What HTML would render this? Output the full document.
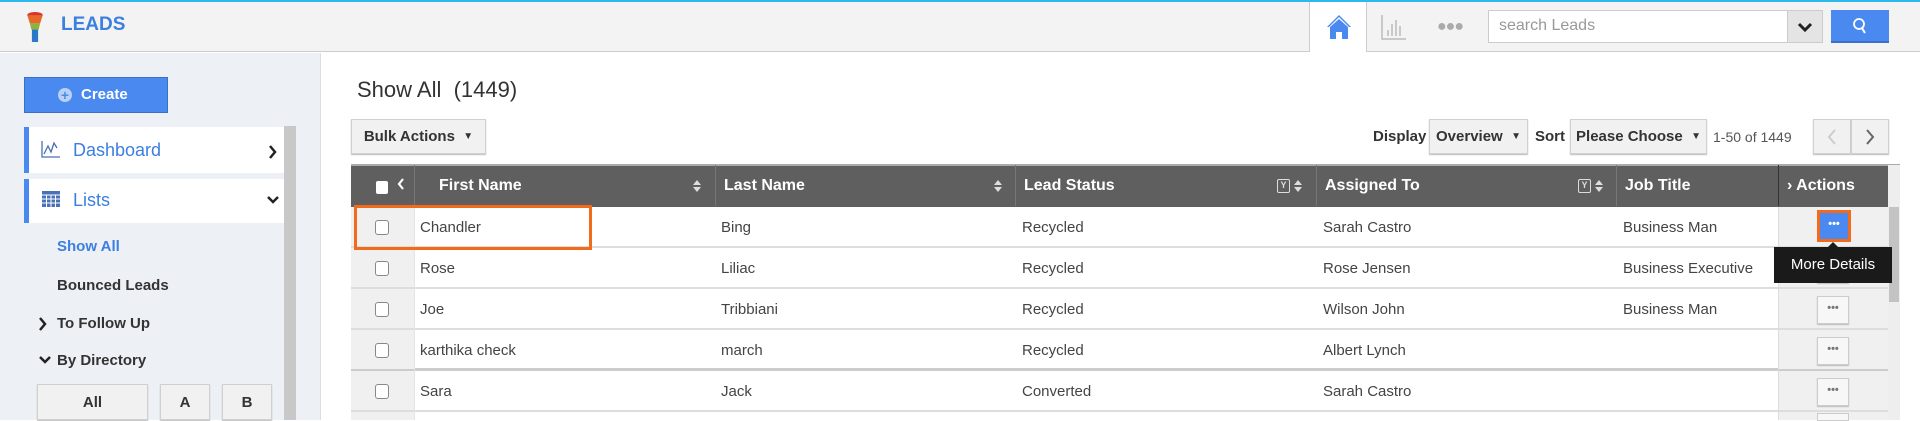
<!DOCTYPE html>
<html><head><meta charset="utf-8"><style>
*{box-sizing:border-box;margin:0;padding:0}
body{width:1920px;height:420px;overflow:hidden;background:#fff;font-family:"Liberation Sans",sans-serif;position:relative;color:#333}
.a{position:absolute}
.btn{position:absolute;background:#f1f1f1;border:1px solid #d0d0d0;box-shadow:0 1px 1px #bbb;font-size:15px;font-weight:bold;color:#333;display:flex;align-items:center;justify-content:center}
.th{position:absolute;top:165px;height:41px;color:#fff;font-weight:bold;font-size:16px;line-height:41px;border-left:1px solid #777}
.row{position:absolute;left:351px;width:1537px;height:41px;border-bottom:2px solid #ddd}
.cell{position:absolute;font-size:15px;color:#444;line-height:41px}
.cb{position:absolute;left:24px;top:13px;width:14px;height:15px;border:1px solid #888;border-radius:3px;background:#fff}
.dots{position:absolute;left:1466px;top:7px;width:32px;height:28px;border:1px solid #ccc;background:#f7f7f7;box-shadow:0 1px 1px #bbb;font-size:11px;color:#777;text-align:center;line-height:22px;font-weight:bold}
.filt{position:absolute;top:179px;width:13px;height:14px;border:1.5px solid #ddd;border-radius:2px;color:#ddd;font-size:9px;text-align:center;line-height:11px;font-weight:bold}
</style></head><body>
<div class="a" style="left:0;top:0;width:1920px;height:2px;background:#2eb8f0"></div>
<div class="a" style="left:0;top:2px;width:1920px;height:50px;background:#f3f3f3;border-bottom:1px solid #ccc"></div>
<svg class="a" style="left:26px;top:12px" width="18" height="31" viewBox="0 0 16 30"><ellipse cx="8" cy="3" rx="7.5" ry="3" fill="#d9342b"/><path d="M0.5 3 H15.5 L13 11 H3Z" fill="#e8672a"/><path d="M3 11 H13 L11.5 17 H4.5Z" fill="#8cb33a"/><rect x="5" y="17" width="6" height="12" fill="#2a78c8"/></svg>
<div class="a" style="left:61px;top:14px;font-size:19px;font-weight:bold;color:#3b7fe0">LEADS</div>
<div class="a" style="left:1309px;top:2px;width:58px;height:50px;background:#fff;border-left:1px solid #ccc;border-right:1px solid #ccc"></div>
<svg class="a" style="left:1326px;top:14px" width="26" height="26" viewBox="0 0 26 26"><path d="M13 1 L1 13 L3 13 L13 3 L23 13 L25 13Z" fill="#4a8af0"/><path d="M4 13 L13 5 L22 13 V25 H16 V18 H10 V25 H4Z" fill="#4a8af0"/></svg>
<svg class="a" style="left:1381px;top:14px" width="26" height="26" viewBox="0 0 26 26" stroke="#bbb" stroke-width="1.5" fill="none"><path d="M1 1 V25 H25 M7 22 V16 M11 22 V10 M15 22 V6 M19 22 V12"/></svg>
<div class="a" style="left:1437px;top:18px;font-size:16px;color:#aaa;letter-spacing:-1px">●●●</div>
<div class="a" style="left:1488px;top:10px;width:300px;height:33px;background:#fff;border:1px solid #ccc"></div>
<div class="a" style="left:1499px;top:17px;font-size:16px;color:#999">search Leads</div>
<div class="a" style="left:1787px;top:10px;width:36px;height:33px;background:#e4e4e4;border:1px solid #ccc"></div>
<svg class="a" style="left:1789px;top:13px" width="32" height="28"><path d="M10 11 L16 17 L22 11" stroke="#222" stroke-width="3" fill="none"/></svg>
<div class="a" style="left:1831px;top:10px;width:58px;height:33px;background:#4a8af0;border-bottom:2px solid #3a70c8"></div>
<svg class="a" style="left:1852px;top:17px" width="16" height="18"><circle cx="7" cy="7" r="5" stroke="#fff" stroke-width="1.8" fill="none"/><path d="M10 11 L13 16" stroke="#fff" stroke-width="2"/></svg>
<!-- sidebar -->
<div class="a" style="left:0;top:53px;width:321px;height:367px;background:#edf0f5;border-right:1px solid #ddd"></div>
<div class="a" style="left:284px;top:126px;width:12px;height:294px;background:#c8c8c8"></div>
<div class="a" style="left:24px;top:77px;width:144px;height:36px;background:#4a8af0;border:1px solid #3a70c8;color:#fff;font-weight:bold;font-size:15px;line-height:34px;text-align:center">&nbsp;&nbsp;&nbsp;&nbsp;Create</div>
<div class="a" style="left:58px;top:88px;width:14px;height:14px;border-radius:50%;background:#b9d0f7;color:#4a8af0;font-size:14px;line-height:14px;text-align:center;font-weight:bold">+</div>
<div class="a" style="left:24px;top:127px;width:260px;height:46px;background:#fff;border-left:5px solid #4a8af0"></div>
<svg class="a" style="left:41px;top:140px" width="20" height="18" stroke="#4a70b8" fill="none" stroke-width="1.3"><path d="M1 1 V17 H19 M3 14 L7 6 L10 12 L13 3 L16 8"/></svg>
<div class="a" style="left:73px;top:140px;font-size:18px;color:#3b7fe0">Dashboard</div>
<svg class="a" style="left:268px;top:144px" width="10" height="16"><path d="M2 2 L7 8 L2 14" stroke="#222" stroke-width="2.5" fill="none"/></svg>
<div class="a" style="left:24px;top:179px;width:260px;height:44px;background:#fff;border-left:5px solid #4a8af0"></div>
<svg class="a" style="left:42px;top:191px" width="18" height="16"><rect x="0" y="0" width="18" height="16" fill="#4a70b8"/><path d="M0 4H18M0 8H18M0 12H18M4.5 4V16M9 4V16M13.5 4V16" stroke="#fff" stroke-width="1"/></svg>
<div class="a" style="left:73px;top:190px;font-size:18px;color:#3b7fe0">Lists</div>
<svg class="a" style="left:266px;top:195px" width="14" height="10"><path d="M2 2 L7 7 L12 2" stroke="#222" stroke-width="2.5" fill="none"/></svg>
<div class="a" style="left:57px;top:238px;font-size:15px;font-weight:bold;color:#3b7fe0">Show All</div>
<div class="a" style="left:57px;top:277px;font-size:15px;font-weight:bold;color:#333">Bounced Leads</div>
<svg class="a" style="left:38px;top:316px" width="10" height="16"><path d="M2 2 L7 8 L2 14" stroke="#222" stroke-width="2.5" fill="none"/></svg>
<div class="a" style="left:57px;top:315px;font-size:15px;font-weight:bold;color:#333">To Follow Up</div>
<svg class="a" style="left:38px;top:355px" width="14" height="10"><path d="M2 2 L7 7 L12 2" stroke="#222" stroke-width="2.5" fill="none"/></svg>
<div class="a" style="left:57px;top:352px;font-size:15px;font-weight:bold;color:#333">By Directory</div>
<div class="btn" style="left:37px;top:384px;width:111px;height:36px">All</div>
<div class="btn" style="left:160px;top:384px;width:50px;height:36px">A</div>
<div class="btn" style="left:222px;top:384px;width:50px;height:36px">B</div>
<!-- main -->
<div class="a" style="left:357px;top:77px;font-size:22px;color:#333">Show All&nbsp;&nbsp;(1449)</div>
<div class="btn" style="left:351px;top:119px;width:135px;height:35px">Bulk Actions&nbsp;&nbsp;<span style="font-size:10px">&#9660;</span></div>
<div class="a" style="left:1373px;top:128px;font-size:15px;font-weight:bold">Display</div>
<div class="btn" style="left:1429px;top:119px;width:99px;height:35px">Overview&nbsp;&nbsp;<span style="font-size:10px">&#9660;</span></div>
<div class="a" style="left:1535px;top:128px;font-size:15px;font-weight:bold">Sort</div>
<div class="btn" style="left:1570px;top:119px;width:137px;height:35px">Please Choose&nbsp;&nbsp;<span style="font-size:10px">&#9660;</span></div>
<div class="a" style="left:1713px;top:129px;font-size:14px;color:#555">1-50 of 1449</div>
<div class="btn" style="left:1813px;top:119px;width:38px;height:35px"><svg width="10" height="18"><path d="M8 2 L2 9 L8 16" stroke="#ccc" stroke-width="2" fill="none"/></svg></div>
<div class="btn" style="left:1851px;top:119px;width:38px;height:35px"><svg width="10" height="18"><path d="M2 2 L8 9 L2 16" stroke="#666" stroke-width="2" fill="none"/></svg></div>
<div class="a" style="left:351px;top:164px;width:1549px;height:43px;background:#5f5f5f;border-top:2px solid #aaa"></div>
<div class="a" style="left:376px;top:181px;width:12px;height:13px;background:#fff;border-radius:2px"></div>
<svg class="a" style="left:396px;top:177px" width="10" height="14"><path d="M7 2 L3 7 L7 12" stroke="#fff" stroke-width="2.2" fill="none"/></svg>
<div class="th" style="left:414px;width:301px;padding-left:24px">First Name</div>
<div class="th" style="left:715px;width:300px;padding-left:8px">Last Name</div>
<div class="th" style="left:1015px;width:301px;padding-left:8px">Lead Status</div>
<div class="th" style="left:1316px;width:300px;padding-left:8px">Assigned To</div>
<div class="th" style="left:1616px;width:162px;padding-left:8px">Job Title</div>
<div class="th" style="left:1778px;width:110px;padding-left:8px;border-left:1px solid #333">&#x203A; Actions</div>
<div class="a" style="left:1888px;top:165px;width:12px;height:255px;background:#eee"></div>
<div class="a" style="left:1889px;top:207px;width:10px;height:95px;background:#c3c3c3"></div>
<svg class="a" style="left:692px;top:178px" width="10" height="16"><path d="M1 7 L5 2 L9 7Z M1 9 L5 14 L9 9Z" fill="#ddd"/></svg>
<svg class="a" style="left:993px;top:178px" width="10" height="16"><path d="M1 7 L5 2 L9 7Z M1 9 L5 14 L9 9Z" fill="#ddd"/></svg>
<div class="filt" style="left:1277px">Y</div>
<svg class="a" style="left:1293px;top:178px" width="10" height="16"><path d="M1 7 L5 2 L9 7Z M1 9 L5 14 L9 9Z" fill="#ddd"/></svg>
<div class="filt" style="left:1578px">Y</div>
<svg class="a" style="left:1594px;top:178px" width="10" height="16"><path d="M1 7 L5 2 L9 7Z M1 9 L5 14 L9 9Z" fill="#ddd"/></svg>

<div class="row" style="top:207px"><div class="a" style="left:0;top:0;width:63px;height:39px;background:#f0f0f0"></div><div class="cb"></div><div class="cell" style="left:69px">Chandler</div><div class="cell" style="left:370px">Bing</div><div class="cell" style="left:671px">Recycled</div><div class="cell" style="left:972px">Sarah Castro</div><div class="cell" style="left:1272px">Business Man</div><div class="a" style="left:1427px;top:0;width:110px;height:39px;background:#f0f0f0"></div></div>
<div class="row" style="top:248px"><div class="a" style="left:0;top:0;width:63px;height:39px;background:#f0f0f0"></div><div class="cb"></div><div class="cell" style="left:69px">Rose</div><div class="cell" style="left:370px">Liliac</div><div class="cell" style="left:671px">Recycled</div><div class="cell" style="left:972px">Rose Jensen</div><div class="cell" style="left:1272px">Business Executive</div><div class="a" style="left:1427px;top:0;width:110px;height:39px;background:#f0f0f0"></div><div class="dots">•••</div></div>
<div class="row" style="top:289px"><div class="a" style="left:0;top:0;width:63px;height:39px;background:#f0f0f0"></div><div class="cb"></div><div class="cell" style="left:69px">Joe</div><div class="cell" style="left:370px">Tribbiani</div><div class="cell" style="left:671px">Recycled</div><div class="cell" style="left:972px">Wilson John</div><div class="cell" style="left:1272px">Business Man</div><div class="a" style="left:1427px;top:0;width:110px;height:39px;background:#f0f0f0"></div><div class="dots">•••</div></div>
<div class="row" style="top:330px;border-bottom:3px solid #ccc"><div class="a" style="left:0;top:0;width:63px;height:39px;background:#f0f0f0"></div><div class="cb"></div><div class="cell" style="left:69px">karthika check</div><div class="cell" style="left:370px">march</div><div class="cell" style="left:671px">Recycled</div><div class="cell" style="left:972px">Albert Lynch</div><div class="a" style="left:1427px;top:0;width:110px;height:39px;background:#f0f0f0"></div><div class="dots">•••</div></div>
<div class="row" style="top:371px"><div class="a" style="left:0;top:0;width:63px;height:39px;background:#f0f0f0"></div><div class="cb"></div><div class="cell" style="left:69px">Sara</div><div class="cell" style="left:370px">Jack</div><div class="cell" style="left:671px">Converted</div><div class="cell" style="left:972px">Sarah Castro</div><div class="a" style="left:1427px;top:0;width:110px;height:39px;background:#f0f0f0"></div><div class="dots">•••</div></div>
<div class="a" style="left:351px;top:412px;width:63px;height:8px;background:#f0f0f0"></div>
<div class="a" style="left:1778px;top:412px;width:110px;height:8px;background:#f0f0f0"></div>
<div class="a" style="left:1817px;top:413px;width:32px;height:8px;border:1px solid #ccc;background:#f7f7f7"></div>
<div class="a" style="left:414px;top:207px;width:1px;height:213px;background:#e4e4e4"></div>
<div class="a" style="left:1778px;top:207px;width:1px;height:213px;background:#ddd"></div>
<!-- highlight -->
<div class="a" style="left:354px;top:205px;width:238px;height:45px;border:3px solid #f26b1d"></div>
<div class="a" style="left:1817px;top:210px;width:34px;height:32px;background:#4a8af0;border:3px solid #f26b1d;color:#fff;font-size:11px;text-align:center;line-height:22px;font-weight:bold">•••</div>
<div class="a" style="left:1827px;top:242px;width:0;height:0;border-left:6px solid transparent;border-right:6px solid transparent;border-bottom:6px solid #1a1a1a"></div>
<div class="a" style="left:1774px;top:247px;width:118px;height:36px;background:#1a1a1a;color:#fff;font-size:15px;line-height:36px;text-align:center">More Details</div>
</body></html>
